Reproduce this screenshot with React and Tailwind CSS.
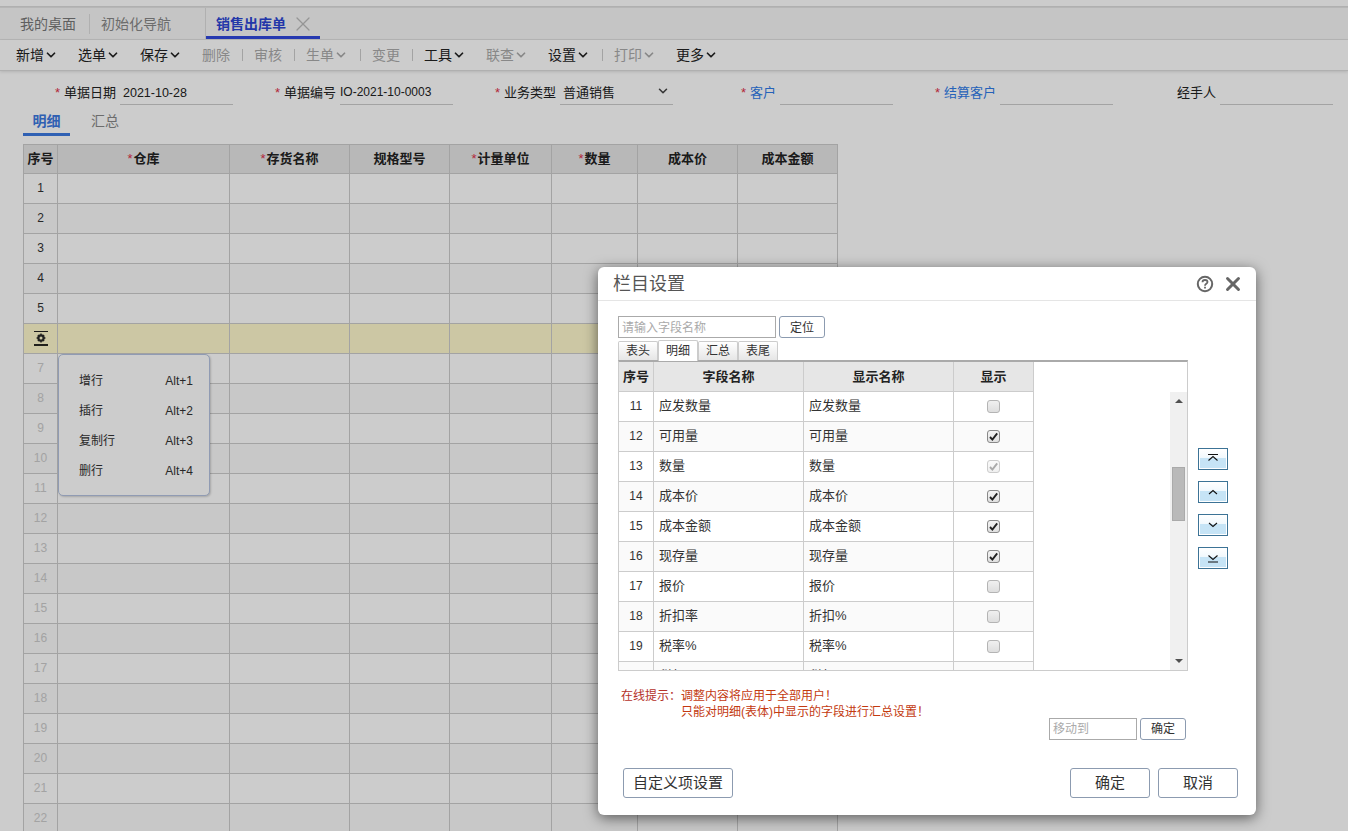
import React from 'react';
import { ChevronDown, X } from 'lucide-react';

const FONT = 'font-["Liberation_Sans","Noto_Sans_CJK_SC",sans-serif]';

const toolbar = [
  { label: '新增', arrow: true, w: 'w-[62px]' },
  { label: '选单', arrow: true, w: 'w-[62px]' },
  { label: '保存', arrow: true, w: 'w-[62px]' },
  { label: '删除', off: true, w: 'w-[40px]', sep: true },
  { label: '审核', off: true, w: 'w-[40px]', sep: true },
  { label: '生单', off: true, arrow: true, w: 'w-[54px]', sep: true },
  { label: '变更', off: true, w: 'w-[40px]', sep: true },
  { label: '工具', arrow: true, w: 'w-[62px]' },
  { label: '联查', off: true, arrow: true, w: 'w-[62px]' },
  { label: '设置', arrow: true, w: 'w-[54px]', sep: true },
  { label: '打印', off: true, arrow: true, w: 'w-[62px]' },
  { label: '更多', arrow: true, w: 'w-[62px]' },
];

const columns = [
  { label: '仓库', w: 'w-[172px]', req: true },
  { label: '存货名称', w: 'w-[120px]', req: true },
  { label: '规格型号', w: 'w-[100px]' },
  { label: '计量单位', w: 'w-[102px]', req: true },
  { label: '数量', w: 'w-[86px]', req: true },
  { label: '成本价', w: 'w-[100px]' },
  { label: '成本金额', w: 'w-[100px]' },
];

const fields = [
  [11, '应发数量', '应发数量', false],
  [12, '可用量', '可用量', true],
  [13, '数量', '数量', true, true],
  [14, '成本价', '成本价', true],
  [15, '成本金额', '成本金额', true],
  [16, '现存量', '现存量', true],
  [17, '报价', '报价', false],
  [18, '折扣率', '折扣%', false],
  [19, '税率%', '税率%', false],
  [20, '税额', '税额', false],
];

const menu = [
  ['增行', 'Alt+1'],
  ['插行', 'Alt+2'],
  ['复制行', 'Alt+3'],
  ['删行', 'Alt+4'],
];

const GearIcon = () => (
  <svg width="16" height="16" viewBox="0 0 16 16" fill="none">
    <path d="M1 0.5h14" stroke="#222" strokeWidth="1" />
    <path d="M1 14h14" stroke="#111" strokeWidth="1.8" />
    <circle cx="8" cy="7" r="2.6" stroke="#2a2a2a" strokeWidth="2.2" />
    <path d="M8 2.6v1.6M8 9.8v1.6M3.6 7h1.6M10.8 7h1.6M4.9 3.9l1.1 1.1M10 9l1.1 1.1M11.1 3.9 10 5M6 9l-1.1 1.1" stroke="#2a2a2a" strokeWidth="1.4" />
  </svg>
);

const MoveIcon = ({ d }) => (
  <svg width="14" height="12" viewBox="0 0 14 12" fill="none">
    <path d={d} stroke="#111" strokeWidth="1.1" />
  </svg>
);

const CheckBox = ({ checked, locked }) => (
  <span
    className={`w-[13px] h-[13px] rounded-[3px] border flex items-center justify-center bg-gradient-to-b ${
      locked
        ? 'border-[#ccc] from-[#fafafa] to-[#f0f0f0]'
        : checked
          ? 'border-[#888] from-[#f4f4f4] to-[#e0e0e0]'
          : 'border-[#b4b4b4] from-[#f0f0f0] to-[#dedede]'
    }`}
  >
    {checked && (
      <svg width="11" height="11" viewBox="0 0 11 11" fill="none">
        <path d="M2 6l2.4 2.6L9.2 2.4" stroke={locked ? '#aaa' : '#222'} strokeWidth="1.9" />
      </svg>
    )}
  </span>
);

const FormField = ({ label, value, req, blue, w, labelW, children }) => (
  <div className="flex items-end gap-[4px]">
    <div className={`flex justify-end items-center h-5 mb-[2px] text-[13px] ${labelW} ${blue ? 'text-[#2f7be8]' : 'text-[#222]'}`}>
      {req && <span className="text-[#e0304a] mr-1">*</span>}
      {label}
    </div>
    <div className={`h-[23px] border-b border-[#ccc] flex items-center justify-between px-[2px] text-[#222] ${w}`}>
      {value}
      {children}
    </div>
  </div>
);

const ModalButton = ({ children, className }) => (
  <button className={`border border-[#8c9bb0] rounded-[3px] bg-white text-[#333] flex items-center justify-center ${className}`}>
    {children}
  </button>
);

export default function App() {
  const rows = Array.from({ length: 22 }, (_, i) => i + 1);

  return (
    <div className={`relative w-[1348px] h-[831px] overflow-hidden bg-white ${FONT}`}>
      {/* page */}
      <div className="h-[6px] border-b border-[#ddd] box-content" />
      <div className="h-[33px] bg-[#f7f7f7] border-y border-[#e4e4e4] flex items-center pl-5 text-sm">
        <span className="text-[#777] w-[70px] border-r border-[#ddd] leading-5">我的桌面</span>
        <span className="text-[#888] pl-[11px] w-[115px] leading-5">初始化导航</span>
        <div className="relative h-full w-[115px] flex items-center pl-[10px] border-l border-[#ddd]">
          <span className="text-[#2b45d4] font-bold">销售出库单</span>
          <X size={24} strokeWidth={1.3} className="text-[#bbb] ml-[5px]" />
          <div className="absolute left-0 right-0 bottom-0 h-[3px] bg-[#3048dc]" />
        </div>
      </div>
      <div className="h-[31px] flex items-center pl-4 text-sm border-b border-[#ddd] shadow-[0_1px_3px_rgba(0,0,0,0.12)]">
        {toolbar.map((t) => (
          <div key={t.label} className="flex items-center">
            <div className={`flex items-center ${t.w} ${t.off ? 'text-[#aaa]' : 'text-[#222]'}`}>
              {t.label}
              {t.arrow && <ChevronDown size={14} strokeWidth={3} />}
            </div>
            {t.sep && <div className="w-px h-3 bg-[#ccc] mr-[11px]" />}
          </div>
        ))}
      </div>

      <div className="flex items-end pl-[24px] pt-[1px] h-[33px] box-content">
        <FormField label="单据日期" value="2021-10-28" req labelW="w-[92px]" w="w-[113px] pl-[3px] text-[12.5px]" />
        <FormField label="单据编号" value="IO-2021-10-0003" req labelW="w-[103px]" w="w-[113px] pl-0 pb-[3px] text-xs" />
        <FormField label="业务类型" value="普通销售" req labelW="w-[103px]" w="w-[113px] pl-[3px] text-[13px]">
          <ChevronDown size={14} strokeWidth={2.6} className="text-[#444] mr-[1px] mb-1" />
        </FormField>
        <FormField label="客户" req blue labelW="w-[103px]" w="w-[113px]" />
        <FormField label="结算客户" req blue labelW="w-[103px]" w="w-[113px]" />
        <FormField label="经手人" labelW="w-[103px]" w="w-[113px]" />
      </div>

      <div className="flex pl-[23px] mt-[6px] h-[25px] text-sm">
        <div className="w-[47px] text-center text-[#3b78e0] font-bold border-b-[3px] border-[#3b78e0]">明细</div>
        <div className="w-[70px] text-center text-[#888]">汇总</div>
      </div>

      <div className="ml-[23px] mt-[8px] w-[815px] border-t border-l border-[#ccc]">
        <div className="flex h-[28px] box-content bg-[#e6e6e6] border-b border-[#ccc] text-[13px] font-bold text-[#222]">
          <div className="w-[34px] flex items-center justify-center border-r border-[#ccc]">序号</div>
          {columns.map((c) => (
            <div key={c.label} className={`flex items-center justify-center border-r border-[#ccc] ${c.w}`}>
              {c.req && <span className="text-[#e0304a] font-normal mr-[1px]">*</span>}
              {c.label}
            </div>
          ))}
        </div>
        {rows.map((n) => (
          <div key={n} className={`flex h-[30px] border-b border-[#ccc] ${n === 6 ? 'bg-[#fff9cd]' : n % 2 === 0 ? 'bg-[#fafafa]' : ''}`}>
            <div className={`w-[34px] flex items-center justify-center border-r border-[#ccc] text-xs ${n === 6 ? '' : 'pb-[1px]'} ${n > 6 ? 'text-[#ccc]' : 'text-[#333]'}`}>
              {n === 6 ? <GearIcon /> : n}
            </div>
            {columns.map((c) => (
              <div key={c.label} className={`border-r border-[#ccc] ${c.w}`} />
            ))}
          </div>
        ))}
      </div>

      {/* row context menu */}
      <div className="absolute left-[58px] top-[354px] w-[152px] h-[142px] py-[11px] bg-white border border-[#b4c2e0] rounded-[5px] shadow-[1px_1px_2px_rgba(0,0,0,0.18)] text-xs text-[#333]">
        {menu.map(([name, key]) => (
          <div key={name} className="h-[30px] flex items-center justify-between pl-5 pr-4">
            <span>{name}</span>
            <span>{key}</span>
          </div>
        ))}
      </div>

      {/* mask */}
      <div className="absolute inset-0 bg-black/20" />

      {/* column settings dialog */}
      <div className="absolute left-[598px] top-[267px] w-[658px] h-[548px] bg-white rounded-[6px] shadow-[0_3px_14px_rgba(0,0,0,0.55)] flex flex-col">
        <div className="h-[33px] box-content shrink-0 border-b border-[#e5e5e5] flex items-center justify-between pl-[15px] pr-[12px]">
          <span className="text-[18px] text-[#555] pt-[1px]">栏目设置</span>
          <div className="flex items-center gap-[8px] text-[#666]">
            <svg width="18" height="18" viewBox="0 0 18 18" fill="none">
              <circle cx="9" cy="9" r="7.2" stroke="#666" strokeWidth="2" />
              <path d="M6.5 7.2C6.5 5.7 7.6 5 9 5s2.5.8 2.5 2.1c0 1.7-2.5 1.8-2.5 3.6" stroke="#666" strokeWidth="1.8" />
              <path d="M9 11.8v1.8" stroke="#666" strokeWidth="1.8" />
            </svg>
            <X size={22} strokeWidth={3.2} />
          </div>
        </div>

        <div className="pl-5 pt-[15px] flex flex-col">
          <div className="flex gap-[3px]">
            <div className="w-[158px] h-[22px] border border-[#aaa] px-[3px] pt-[2px] flex items-center text-xs text-[#aaa]">请输入字段名称</div>
            <ModalButton className="w-[46px] h-[22px] pt-[1px] text-xs">定位</ModalButton>
          </div>

          <div className="flex h-[19px] mt-[3px] text-xs text-[#333]">
            {['表头', '明细', '汇总', '表尾'].map((t) => (
              <div
                key={t}
                className={`w-[40px] border border-[#ccc] border-b-0 rounded-t-[2px] flex items-center justify-center ${
                  t === '明细' ? 'bg-white h-[21px] -mt-px relative' : 'bg-gradient-to-b from-white to-[#e6e6e6]'
                }`}
              >
                {t}
              </div>
            ))}
          </div>

          <div className="flex">
            <div className="w-[570px] h-[311px] border-t-2 border-t-[#aaa] border-x border-b border-[#ccc] flex flex-col text-xs text-[#333] overflow-hidden">
              <div className="flex h-[30px] shrink-0 font-bold text-[13px] text-[#222]">
                <div className="w-[35px] bg-[#e6e6e6] border-r border-b border-[#ccc] flex items-center justify-center">序号</div>
                <div className="w-[150px] bg-[#e6e6e6] border-r border-b border-[#ccc] flex items-center justify-center">字段名称</div>
                <div className="w-[150px] bg-[#e6e6e6] border-r border-b border-[#ccc] flex items-center justify-center">显示名称</div>
                <div className="w-[80px] bg-[#e6e6e6] border-r border-b border-[#ccc] flex items-center justify-center">显示</div>
              </div>
              <div className="flex flex-1 min-h-0">
                <div className="w-[415px] overflow-hidden">
                  {fields.map(([no, name, show, checked, locked]) => (
                    <div key={no} className={`flex h-[30px] border-b border-[#ccc] ${no % 2 === 0 ? 'bg-[#fafafa]' : ''}`}>
                      <div className="w-[35px] border-r border-[#ccc] flex items-center justify-center pb-[1px]">{no}</div>
                      <div className="w-[150px] border-r border-[#ccc] flex items-center pl-[5px] pb-[2px] text-[13px]">{name}</div>
                      <div className="w-[150px] border-r border-[#ccc] flex items-center pl-[5px] pb-[2px] text-[13px]">{show}</div>
                      <div className="w-[80px] border-r border-[#ccc] flex items-center justify-center">
                        <CheckBox checked={checked} locked={locked} />
                      </div>
                    </div>
                  ))}
                </div>
                <div className="flex-1" />
                <div className="w-[17px] bg-[#f0f0f0] relative">
                  <div className="absolute top-[7px] left-[5px] border-x-[4px] border-x-transparent border-b-[4px] border-b-[#505050]" />
                  <div className="absolute top-[75px] left-[2px] w-[13px] h-[54px] bg-[#b9b9b9] border border-[#aaa]" />
                  <div className="absolute bottom-[7px] left-[5px] border-x-[4px] border-x-transparent border-t-[4px] border-t-[#505050]" />
                </div>
              </div>
            </div>

            <div className="ml-[10px] mt-[88px] flex flex-col gap-[11px]">
              {['M2 1.5h10M2.5 7.5 7 3.5l4.5 4', 'M3 8l4-3.5L11 8', 'M3 4l4 3.5L11 4', 'M2.5 3.5 7 7.5l4.5-4M2 10h10'].map((d) => (
                <div key={d} className="w-[30px] h-[22px] border border-[#3c7396] shadow-[inset_0_0_0_1px_#fff] bg-[linear-gradient(#fff_0%,#f0f8fd_45%,#c6e4f6_46%,#c6e4f6_100%)] flex items-center justify-center">
                  <MoveIcon d={d} />
                </div>
              ))}
            </div>
          </div>

          <div className="mt-[17px] pl-[3px] text-xs leading-4 text-[#c33a10]">
            <div><span className="text-[#b5312a]">在线提示：</span>调整内容将应用于全部用户！</div>
            <div className="pl-[60px]">只能对明细(表体)中显示的字段进行汇总设置！</div>
          </div>

          <div className="flex justify-end gap-[3px] w-[568px] -mt-[2px]">
            <div className="w-[88px] h-[22px] border border-[#aaa] px-[3px] flex items-center text-xs text-[#aaa]">移动到</div>
            <ModalButton className="w-[46px] h-[22px] text-xs">确定</ModalButton>
          </div>
        </div>

        <div className="flex justify-between pl-[25px] pr-[18px] mt-[28px] text-[15px]">
          <ModalButton className="w-[110px] h-[30px]">自定义项设置</ModalButton>
          <div className="flex gap-2">
            <ModalButton className="w-[80px] h-[30px]">确定</ModalButton>
            <ModalButton className="w-[80px] h-[30px]">取消</ModalButton>
          </div>
        </div>
      </div>
    </div>
  );
}
